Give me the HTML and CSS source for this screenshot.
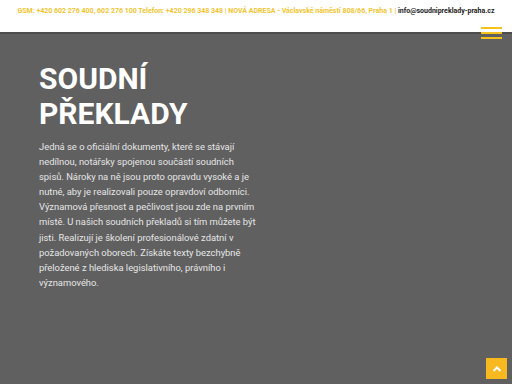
FILE: index.html
```html
<!DOCTYPE html>
<html lang="cs">
<head>
<meta charset="utf-8">
<title>Soudní překlady</title>
<link rel="stylesheet" href="styles.css">
</head>
<body>
<header class="topbar">
  <p class="contact">GSM: +420 602 276 400, 602 276 100 Telefon: +420 296 348 348 | NOVÁ ADRESA - Václavské náměstí 808/66, Praha 1 | <a class="mail" href="#">info@soudnipreklady-praha.cz</a></p>
</header>
<main class="hero">
  <button class="burger" aria-label="menu"><span></span><span></span><span></span></button>
  <section class="intro">
    <h1 class="title">SOUDNÍ<br>PŘEKLADY</h1>
    <p class="text">Jedná se o oficiální dokumenty, které se stávají<br>nedílnou, notářsky spojenou součástí soudních<br>spisů. Nároky na ně jsou proto opravdu vysoké a je<br>nutné, aby je realizovali pouze opravdoví odborníci.<br>Významová přesnost a pečlivost jsou zde na prvním<br>místě. U našich soudních překladů si tím můžete být<br>jisti. Realizují je školení profesionálové zdatní v<br>požadovaných oborech. Získáte texty bezchybně<br>přeložené z hlediska legislativního, právního i<br>významového.</p>
  </section>
  <a class="totop" href="#" aria-label="nahoru"><svg width="10" height="8" viewBox="0 0 10 8"><path d="M1.5 6 L5 2.5 L8.5 6" fill="none" stroke="#fff" stroke-width="2"/></svg></a>
</main>
</body>
</html>
```
FILE: styles.css
```css
html, body { margin: 0; padding: 0; }
body {
  font-family: Roboto, "Liberation Sans", sans-serif;
  background: #606060;
  width: 512px;
  height: 384px;
  overflow: hidden;
}
.topbar {
  background: #fff;
  height: 32px;
  display: flex;
  align-items: flex-start;
  justify-content: center;
}
.contact {
  margin: 7px 0 0;
  font-size: 7px;
  font-weight: 700;
  color: #efc530;
  white-space: nowrap;
}
.mail { color: #222; text-decoration: none; }
.hero {
  position: relative;
  height: 352px;
  background: #606060;
  border-top: 2px solid #4d4d4d;
  box-sizing: border-box;
  padding: 27px 0 0 39px;
}
.burger {
  position: absolute;
  top: -7px;
  right: 10px;
  width: 21px;
  height: 12px;
  padding: 0;
  border: 0;
  background: transparent;
  display: flex;
  flex-direction: column;
  justify-content: space-between;
}
.burger span { display: block; height: 2px; width: 100%; background: #f5c21b; }
.intro { width: 220px; }
.title {
  margin: 0;
  color: #fff;
  font-size: 30px;
  line-height: 35px;
  font-weight: 700;
}
.text {
  margin: 8px 0 0;
  color: #e6e6e6;
  font-size: 9.4px;
  line-height: 15.1px;
  white-space: nowrap;
}
.totop {
  position: absolute;
  right: 5px;
  bottom: 5px;
  width: 21px;
  height: 21px;
  background: #f7b820;
  display: flex;
  align-items: center;
  justify-content: center;
}
```
